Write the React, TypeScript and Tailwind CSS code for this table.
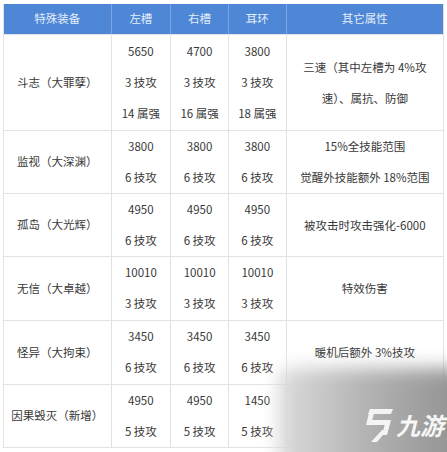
import React from "react";

interface Row {
  name: string;
  h: string;
  cols: string[][];
  other: React.ReactNode;
}

const rows: Row[] = [
  {
    name: "斗志（大罪孽）",
    h: "h-[96px]",
    cols: [
      ["5650", "3 技攻", "14 属强"],
      ["4700", "3 技攻", "16 属强"],
      ["3800", "3 技攻", "18 属强"],
    ],
    other: (
      <>
        三速（其中左槽为 4%攻
        <br />
        速）、属抗、防御
      </>
    ),
  },
  {
    name: "监视（大深渊）",
    h: "h-[63px]",
    cols: [
      ["3800", "6 技攻"],
      ["3800", "6 技攻"],
      ["3800", "6 技攻"],
    ],
    other: (
      <>
        15%全技能范围
        <br />
        觉醒外技能额外 18%范围
      </>
    ),
  },
  {
    name: "孤岛（大光辉）",
    h: "h-[63px]",
    cols: [
      ["4950", "6 技攻"],
      ["4950", "6 技攻"],
      ["4950", "6 技攻"],
    ],
    other: "被攻击时攻击强化-6000",
  },
  {
    name: "无信（大卓越）",
    h: "h-[64px]",
    cols: [
      ["10010", "3 技攻"],
      ["10010", "3 技攻"],
      ["10010", "3 技攻"],
    ],
    other: "特效伤害",
  },
  {
    name: "怪异（大拘束）",
    h: "h-[64px]",
    cols: [
      ["3450", "6 技攻"],
      ["3450", "6 技攻"],
      ["3450", "6 技攻"],
    ],
    other: "暖机后额外 3%技攻",
  },
  {
    name: "因果毁灭（新增）",
    h: "h-[63px]",
    cols: [
      ["4950", "5 技攻"],
      ["4950", "5 技攻"],
      ["1450", "5 技攻"],
    ],
    other: "",
  },
];

const widths = ["w-[108px]", "w-[60px]", "w-[58px]", "w-[58px]", "w-[157px]"];
const headers = ["特殊装备", "左槽", "右槽", "耳环", "其它属性"];

export default function App() {
  return (
    <div
      className="relative w-[447px] h-[452px] overflow-hidden bg-white pt-[4px] pl-[3px] text-[11.5px] text-[#383838]"
      style={{ fontFamily: '"Noto Sans CJK SC", "Noto Sans", sans-serif' }}
    >
      <div className="w-[441px] border-l border-r border-b border-[#e2e2e2]">
        {/* header */}
        <div className="flex h-[30px] bg-[#4d87d6] text-[#e4edf9]">
          {headers.map((t, i) => (
            <div
              key={t}
              className={`${widths[i]} flex items-center justify-center ${i < 4 ? "border-r border-[#7ba6e2]" : ""}`}
            >
              {t}
            </div>
          ))}
        </div>

        {rows.map((r) => (
          <div key={r.name} className={`flex ${r.h} border-t border-[#e2e2e2]`}>
            <div className="w-[108px] flex items-center justify-center border-r border-[#e2e2e2]">
              {r.name}
            </div>
            {r.cols.map((c, i) => (
              <div
                key={i}
                className={`${widths[i + 1]} flex flex-col items-center justify-center border-r border-[#e2e2e2]`}
              >
                {c.map((line, j) => (
                  <div key={j} className="h-[31px] flex items-center">
                    {line}
                  </div>
                ))}
              </div>
            ))}
            <div className="w-[157px] flex items-center justify-center text-center leading-[31px]">
              <div>{r.other}</div>
            </div>
          </div>
        ))}
      </div>

      {/* watermark shadow */}
      <svg className="absolute left-[250px] top-[340px]" width="197" height="112" viewBox="0 0 197 112">
        <defs>
          <filter id="wm-blur" x="-30%" y="-30%" width="160%" height="160%">
            <feGaussianBlur stdDeviation="9" />
          </filter>
          <linearGradient id="wm-grad" x1="0" y1="0" x2="1" y2="0">
            <stop offset="0" stopColor="#dcdcdc" />
            <stop offset="0.45" stopColor="#b2b2b2" />
            <stop offset="1" stopColor="#8c8c8c" />
          </linearGradient>
        </defs>
        <rect x="28" y="28" width="200" height="110" rx="14" fill="url(#wm-grad)" filter="url(#wm-blur)" />
      </svg>
      <div className="absolute left-[364px] top-[408px] flex items-center whitespace-nowrap">
        <svg width="30" height="34" viewBox="0 0 30 34" fill="#f4f4f4">
          <polygon points="6,1 29,1 27,6 4,6" />
          <polygon points="6,1 11,1 7,17 2,17" />
          <polygon points="4,12 26,12 25,17 3,17" />
          <polygon points="22,12 27,12 23,27 18,27" />
          <polygon points="18,22 23,22 13,34 7,34" />
        </svg>
        <span className="ml-[2px] text-[24px] italic font-bold text-[#f6f6f6] leading-none">
          九游
        </span>
      </div>
    </div>
  );
}
